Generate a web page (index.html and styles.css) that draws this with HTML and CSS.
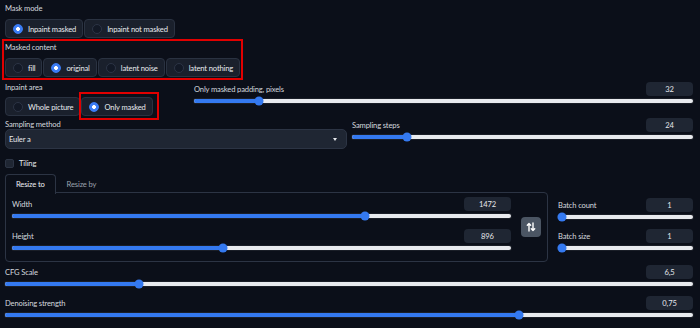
FILE: index.html
```html
<!DOCTYPE html>
<html>
<head>
<meta charset="utf-8">
<title>Inpaint settings</title>
<link rel="stylesheet" href="styles.css">
</head>
<body>
<div class="page">
  <div class="field">
    <div class="label">Mask mode</div>
    <div class="radio-group">
      <label class="radio on"><span class="dot"></span>Inpaint masked</label>
      <label class="radio"><span class="dot"></span>Inpaint not masked</label>
    </div>
  </div>

  <div class="field marked">
    <div class="label">Masked content</div>
    <div class="radio-group">
      <label class="radio"><span class="dot"></span>fill</label>
      <label class="radio on"><span class="dot"></span>original</label>
      <label class="radio"><span class="dot"></span>latent noise</label>
      <label class="radio"><span class="dot"></span>latent nothing</label>
    </div>
  </div>

  <div class="row r3">
    <div class="col-area">
      <div class="label">Inpaint area</div>
      <div class="radio-group">
        <label class="radio"><span class="dot"></span>Whole picture</label>
        <span class="mark-item"><label class="radio on"><span class="dot"></span>Only masked</label></span>
      </div>
    </div>
    <div class="slider grow">
      <div class="slider-head"><span class="label">Only masked padding, pixels</span><span class="num">32</span></div>
      <div class="track"><div class="bar"><div class="fill" style="width:13%"></div><span class="thumb" style="left:13%"></span></div></div>
    </div>
  </div>

  <div class="row r4">
    <div class="col-sampler">
      <div class="label">Sampling method</div>
      <div class="select"><span>Euler a</span><span class="caret"></span></div>
    </div>
    <div class="slider grow">
      <div class="slider-head"><span class="label">Sampling steps</span><span class="num">24</span></div>
      <div class="track"><div class="bar"><div class="fill" style="width:16.1%"></div><span class="thumb" style="left:16.1%"></span></div></div>
    </div>
  </div>

  <label class="checkbox"><span class="box"></span>Tiling</label>

  <div class="row r6">
    <div class="tabs">
      <div class="tab-bar">
        <span class="tab active">Resize to</span>
        <span class="tab">Resize by</span>
      </div>
      <div class="tab-panel">
        <div class="dims">
          <div class="slider">
            <div class="slider-head"><span class="label">Width</span><span class="num">1472</span></div>
            <div class="track"><div class="bar"><div class="fill" style="width:70.8%"></div><span class="thumb" style="left:70.8%"></span></div></div>
          </div>
          <div class="slider">
            <div class="slider-head"><span class="label">Height</span><span class="num">896</span></div>
            <div class="track"><div class="bar"><div class="fill" style="width:42.2%"></div><span class="thumb" style="left:42.2%"></span></div></div>
          </div>
        </div>
        <button class="swap" type="button" aria-label="Swap">
          <svg width="10" height="10" viewBox="0 0 10 10" fill="none" stroke="#fff" stroke-width="1.4" stroke-linecap="round" stroke-linejoin="round">
            <path d="M3 9V1.5M1.3 3.2L3 1.5L4.7 3.2"/>
            <path d="M7 1v7.5M5.3 6.8L7 8.5L8.7 6.8"/>
          </svg>
        </button>
      </div>
    </div>
    <div class="batch">
      <div class="slider">
        <div class="slider-head"><span class="label">Batch count</span><span class="num">1</span></div>
        <div class="track"><div class="bar"><div class="fill" style="width:3%"></div><span class="thumb" style="left:3%"></span></div></div>
      </div>
      <div class="slider">
        <div class="slider-head"><span class="label">Batch size</span><span class="num">1</span></div>
        <div class="track"><div class="bar"><div class="fill" style="width:3%"></div><span class="thumb" style="left:3%"></span></div></div>
      </div>
    </div>
  </div>

  <div class="slider cfg">
    <div class="slider-head"><span class="label">CFG Scale</span><span class="num">6,5</span></div>
    <div class="track"><div class="bar"><div class="fill" style="width:19.5%"></div><span class="thumb" style="left:19.5%"></span></div></div>
  </div>

  <div class="slider denoise">
    <div class="slider-head"><span class="label">Denoising strength</span><span class="num">0,75</span></div>
    <div class="track"><div class="bar"><div class="fill" style="width:74.7%"></div><span class="thumb" style="left:74.7%"></span></div></div>
  </div>
</div>
</body>
</html>
```

FILE: styles.css
```css
* { box-sizing: border-box; }

html, body {
  margin: 0;
  background: #0b0f19;
}

body {
  color: #e5e7eb;
  font-family: Lato, "Liberation Sans", sans-serif;
  font-size: 7.6px;
  letter-spacing: -0.15px;
  overflow: hidden;
}

.page {
  width: 700px;
  height: 328px;
  padding: 3px 7px 0 5px;
  display: flex;
  flex-direction: column;
}

.label {
  line-height: 10px;
  height: 10px;
  color: #d4d8de;
  white-space: nowrap;
}

.field {
  display: flex;
  flex-direction: column;
  align-items: flex-start;
}

.marked {
  margin-top: 4px;
  outline: 2px solid #e10000;
  outline-offset: 1px;
  align-self: flex-start;
}

.radio-group {
  display: flex;
  gap: 1px;
  margin-top: 6px;
}

.radio {
  display: flex;
  align-items: center;
  gap: 5px;
  height: 19px;
  padding: 0 6px 0 7px;
  background: #1a202c;
  border: 1px solid #2a3241;
  border-radius: 4px;
  color: #e8eaee;
  white-space: nowrap;
}

.dot {
  width: 10px;
  height: 10px;
  border-radius: 50%;
  background: #131926;
  border: 1px solid #2c3445;
}

.radio.on .dot {
  border-color: #3b7cf4;
  background: radial-gradient(circle, #ffffff 0 1.7px, #3b7cf4 2.2px);
}

.mark-item {
  display: flex;
  padding: 3px 4px 2px 0;
  margin: -3px -4px -2px 0;
  outline: 2px solid #e10000;
}

.row {
  display: flex;
}

.r3 {
  margin-top: 5px;
}

.col-area {
  width: 189px;
  flex: none;
}

.col-area .radio-group {
  margin-top: 5px;
}

.grow {
  flex: 1;
}

.r4 {
  margin-top: 2px;
  gap: 5px;
}

.col-sampler {
  width: 342px;
  flex: none;
  padding-top: 1px;
}

.select {
  height: 20px;
  display: flex;
  align-items: center;
  justify-content: space-between;
  padding: 0 9px 0 3px;
  background: #1f2633;
  border: 1px solid #2c3444;
  border-radius: 5px;
  color: #e5e7eb;
}

.caret {
  width: 0;
  height: 0;
  border-left: 2.5px solid transparent;
  border-right: 2.5px solid transparent;
  border-top: 3px solid #e5e7eb;
  margin-top: 1px;
}

.checkbox {
  margin-top: 10px;
  display: flex;
  align-items: center;
  gap: 5px;
  height: 9px;
  line-height: 9px;
}

.box {
  width: 9px;
  height: 9px;
  border-radius: 2px;
  background: #1f2633;
  border: 1px solid #2c3444;
}

.slider {
  display: flex;
  flex-direction: column;
}

.slider-head {
  height: 14px;
  display: flex;
  align-items: center;
  justify-content: space-between;
}

.num {
  width: 47px;
  height: 14px;
  line-height: 14px;
  text-align: center;
  background: #1f2633;
  border-radius: 4px;
  color: #e5e7eb;
}

.track {
  height: 10px;
  display: flex;
  align-items: center;
}

.bar {
  position: relative;
  width: 100%;
  height: 4px;
  border-radius: 2px;
  background: #e8eaee;
  box-shadow: 0 0 0 1px #1a1e27;
}

.fill {
  height: 100%;
  border-radius: 2px;
  background: #3479f0;
}

.thumb {
  position: absolute;
  top: 50%;
  width: 9px;
  height: 9px;
  border-radius: 50%;
  background: #3479f0;
  transform: translate(-50%, -50%);
}

.r6 {
  margin-top: 6px;
  gap: 10px;
}

.tabs {
  width: 543px;
  flex: none;
  display: flex;
  flex-direction: column;
}

.tab-bar {
  display: flex;
  height: 19px;
}

.tab {
  padding: 0 10px;
  line-height: 18px;
  color: #9aa1ad;
  border: 1px solid transparent;
  border-bottom: none;
}

.tab.active {
  position: relative;
  z-index: 1;
  height: 20px;
  color: #eef0f3;
  background: #0b0f19;
  border-color: #2c3444;
  border-radius: 4px 4px 0 0;
}

.tab-panel {
  margin-top: -1px;
  display: flex;
  align-items: center;
  gap: 10px;
  padding: 4px 6px 8px 6px;
  border: 1px solid #2c3444;
  border-radius: 0 4px 4px 4px;
}

.dims {
  flex: 1;
  display: flex;
  flex-direction: column;
  gap: 8px;
}

.swap {
  width: 20px;
  height: 20px;
  flex: none;
  padding: 0;
  border: none;
  border-radius: 4px;
  background: #4b5563;
  display: flex;
  align-items: center;
  justify-content: center;
  margin-top: 3px;
}

.batch {
  flex: 1;
  margin-top: 24px;
  display: flex;
  flex-direction: column;
  gap: 7px;
}

.cfg {
  margin-top: 3px;
}

.denoise {
  margin-top: 7px;
}
```
